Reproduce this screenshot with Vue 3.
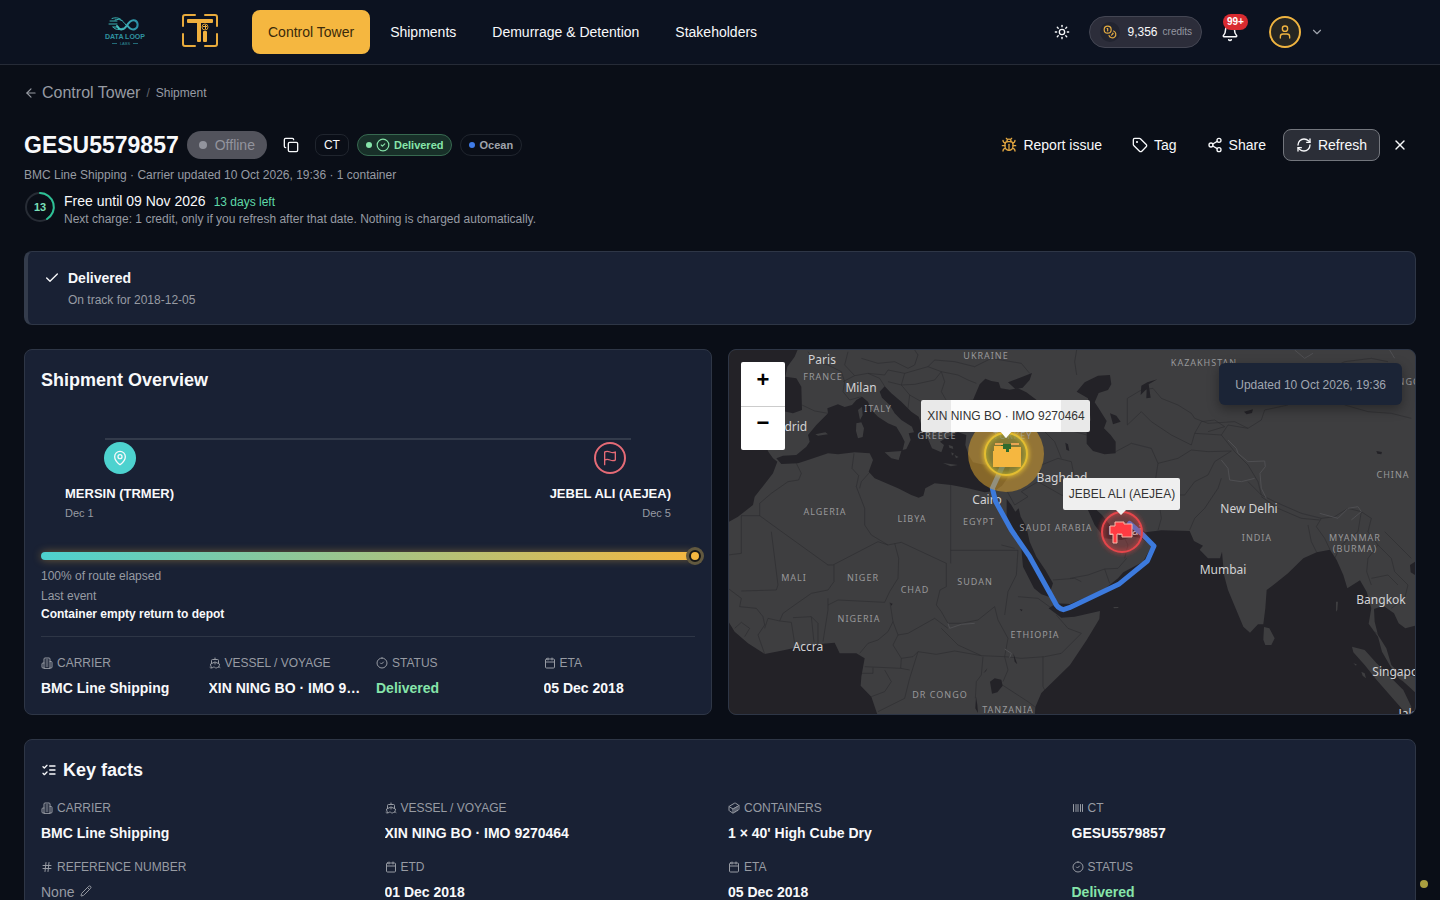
<script setup>
import { h } from 'vue'

const glyphs = {
  arrow: ['m12 19-7-7 7-7', 'M19 12H5'],
  copy: ['M10 8h10a2 2 0 0 1 2 2v10a2 2 0 0 1-2 2H10a2 2 0 0 1-2-2V10a2 2 0 0 1 2-2z', 'M4 16c-1.1 0-2-.9-2-2V4c0-1.1.9-2 2-2h10c1.1 0 2 .9 2 2'],
  check: ['M20 6 9 17l-5-5'],
  circleCheck: ['M12 2a10 10 0 1 0 0 20 10 10 0 0 0 0-20z', 'm9 12 2 2 4-4'],
  x: ['M18 6 6 18', 'm6 6 12 12'],
  bug: ['m8 2 1.9 1.9', 'M14.1 3.9 16 2', 'M9 7.1v-1a3 3 0 1 1 6 0v1', 'M12 20c-3.3 0-6-2.7-6-6v-3a4 4 0 0 1 4-4h4a4 4 0 0 1 4 4v3c0 3.3-2.7 6-6 6', 'M12 20v-9', 'M6.5 9C4.6 8.8 3 7.1 3 5', 'M6 13H2', 'M3 21c0-2.1 1.7-3.9 3.8-4', 'M21 5c0 2.1-1.6 3.8-3.5 4', 'M22 13h-4', 'M17.2 17c2.1.1 3.8 1.9 3.8 4'],
  tag: ['M12.6 2.6A2 2 0 0 0 11.2 2H4a2 2 0 0 0-2 2v7.2a2 2 0 0 0 .6 1.4l8.7 8.7a2.4 2.4 0 0 0 3.4 0l6.6-6.6a2.4 2.4 0 0 0 0-3.4z', 'M7.5 7v1', 'M7 7.500h1'],
  share: ['M18 2a3 3 0 1 0 0 6 3 3 0 0 0 0-6z', 'M6 9a3 3 0 1 0 0 6 3 3 0 0 0 0-6z', 'M18 16a3 3 0 1 0 0 6 3 3 0 0 0 0-6z', 'm8.600 13.500 6.800 4', 'm15.400 6.500-6.800 4'],
  refresh: ['M3 12a9 9 0 0 1 9-9 9.750 9.750 0 0 1 6.740 2.740L21 8', 'M21 3v5h-5', 'M21 12a9 9 0 0 1-9 9 9.750 9.750 0 0 1-6.740-2.740L3 16', 'M8 16H3v5'],
  sun: ['M12 8a4 4 0 1 0 0 8 4 4 0 0 0 0-8z', 'M12 2v2', 'M12 20v2', 'm4.930 4.930 1.410 1.410', 'm17.660 17.660 1.410 1.410', 'M2 12h2', 'M20 12h2', 'm6.340 17.660-1.410 1.410', 'm19.070 4.930-1.410 1.410'],
  coins: ['M8 2a6 6 0 1 0 0 12A6 6 0 0 0 8 2z', 'M18.090 10.370A6 6 0 1 1 10.340 18', 'M7 6h1v4', 'm16.710 13.880.7.710-2.820 2.820'],
  bell: ['M10.270 21a2 2 0 0 0 3.460 0', 'M3.260 15.330A1 1 0 0 0 4 17h16a1 1 0 0 0 .740-1.670C19.410 13.960 18 12.500 18 8A6 6 0 0 0 6 8c0 4.500-1.410 5.960-2.740 7.330'],
  user: ['M19 21v-2a4 4 0 0 0-4-4H9a4 4 0 0 0-4 4v2', 'M12 3a4 4 0 1 0 0 8 4 4 0 0 0 0-8z'],
  chevron: ['m6 9 6 6 6-6'],
  pin: ['M20 10c0 5-5.500 10.200-7.400 11.800a1 1 0 0 1-1.200 0C9.500 20.200 4 15 4 10a8 8 0 0 1 16 0', 'M12 7a3 3 0 1 0 0 6 3 3 0 0 0 0-6z'],
  flag: ['M4 15s1-1 4-1 5 2 8 2 4-1 4-1V3s-1 1-4 1-5-2-8-2-4 1-4 1z', 'M4 22v-7'],
  building: ['M6 22V4a2 2 0 0 1 2-2h8a2 2 0 0 1 2 2v18Z', 'M6 12H4a2 2 0 0 0-2 2v6a2 2 0 0 0 2 2h2', 'M18 9h2a2 2 0 0 1 2 2v9a2 2 0 0 1-2 2h-2', 'M10 6h4', 'M10 10h4', 'M10 14h4', 'M10 18h4'],
  ship: ['M12 10.200V14', 'M12 2v3', 'M19 13V7a2 2 0 0 0-2-2H7a2 2 0 0 0-2 2v6', 'M19.400 20A11.600 11.600 0 0 0 21 14l-8.200-3.600a2 2 0 0 0-1.600 0L3 14a11.600 11.600 0 0 0 2.800 7.800', 'M2 21c.6.5 1.200 1 2.500 1 2.500 0 2.500-2 5-2 1.300 0 1.900.5 2.500 1s1.200 1 2.500 1c2.500 0 2.500-2 5-2 1.300 0 1.900.5 2.500 1'],
  calendar: ['M8 2v4', 'M16 2v4', 'M5 4h14a2 2 0 0 1 2 2v14a2 2 0 0 1-2 2H5a2 2 0 0 1-2-2V6a2 2 0 0 1 2-2z', 'M3 10h18'],
  container: ['M22 7.700c0-.6-.4-1.200-.8-1.500l-6.300-3.900a1.700 1.700 0 0 0-1.700 0l-10.300 6c-.5.2-.9.8-.9 1.400v6.600c0 .5.4 1.200.8 1.500l6.300 3.900a1.700 1.700 0 0 0 1.700 0l10.300-6c.5-.3.9-1 .9-1.500Z', 'M10 21.900V14L2.100 9.100', 'm10 14 11.900-6.900', 'M14 19.800v-8.100', 'M18 17.500V9.400'],
  barcode: ['M3 5v14', 'M8 5v14', 'M12 5v14', 'M17 5v14', 'M21 5v14'],
  hash: ['M4 9h16', 'M4 15h16', 'M10 3 8 21', 'm16 3-2 18'],
  pencil: ['M21.200 6.800a1 1 0 0 0-4-4L3.800 16.200a2 2 0 0 0-.5.8L2 21.400a.5.5 0 0 0 .6.6l4.400-1.300a2 2 0 0 0 .8-.5z', 'm15 5 4 4'],
  list: ['m3 17 2 2 4-4', 'm3 7 2 2 4-4', 'M13 6h8', 'M13 12h8', 'M13 18h8'],
}

const Icon = (p) =>
  h('svg', {
    viewBox: '0 0 24 24', width: p.size || 16, height: p.size || 16, fill: 'none', stroke: 'currentColor',
    'stroke-width': 2, 'stroke-linecap': 'round', 'stroke-linejoin': 'round', 'aria-hidden': 'true',
  }, glyphs[p.name].map((d) => h('path', { d })))
Icon.props = ['name', 'size']

const summary = [
  { icon: 'building', label: 'Carrier', value: 'BMC Line Shipping' },
  { icon: 'ship', label: 'Vessel / Voyage', value: 'XIN NING BO · IMO 9270464' },
  { icon: 'circleCheck', label: 'Status', value: 'Delivered', tone: 'good' },
  { icon: 'calendar', label: 'ETA', value: '05 Dec 2018' },
]
const facts = [
  { icon: 'building', label: 'Carrier', value: 'BMC Line Shipping' },
  { icon: 'ship', label: 'Vessel / Voyage', value: 'XIN NING BO · IMO 9270464' },
  { icon: 'container', label: 'Containers', value: "1 × 40' High Cube Dry" },
  { icon: 'barcode', label: 'CT', value: 'GESU5579857' },
  { icon: 'hash', label: 'Reference number', value: 'None', tone: 'none', editable: true },
  { icon: 'calendar', label: 'ETD', value: '01 Dec 2018' },
  { icon: 'calendar', label: 'ETA', value: '05 Dec 2018' },
  { icon: 'circleCheck', label: 'Status', value: 'Delivered', tone: 'good' },
]

const countries = [
  ['FRANCE', 94, 30], ['UKRAINE', 257, 9], ['ITALY', 149, 62], ['GREECE', 208, 89],
  ['KAZAKHSTAN', 475, 16], ['MONGOLIA', 680, 35], ['CHINA', 664, 128], ['ALGERIA', 96, 165], ['LIBYA', 183, 172],
  ['EGYPT', 250, 175], ['SAUDI ARABIA', 327, 181], ['IRAN', 393, 136], ['INDIA', 528, 191], ['MYANMAR', 626, 191],
  ['(BURMA)', 626, 202], ['MALI', 65, 231], ['NIGER', 134, 231], ['CHAD', 186, 243], ['SUDAN', 246, 235],
  ['NIGERIA', 130, 272], ['ETHIOPIA', 306, 288], ['DR CONGO', 211, 348], ['TANZANIA', 279, 363],
]
const cities = [
  ['Paris', 93, 14], ['Milan', 132, 42], ['Madrid', 58, 81], ['Cairo', 258, 154], ['Baghdad', 333, 132],
  ['New Delhi', 520, 163], ['Mumbai', 494, 224], ['Bangkok', 652, 254], ['Singapore', 672, 326],
  ['Accra', 79, 301], ['Jakarta', 689, 368], ['Dubai', 396, 185],
]

// Map geometry is drawn on a grid three times finer than the label grid.
const seas = [
  'M0 0H215L200 35 178 65 172 95 205 100 220 125 222 195 195 205 150 195 110 180 95 230 100 280 122 322 135 340 148 350 135 385 100 430 80 455 75 480 30 515 0 532Z',
  'M145 340 165 332 205 330 235 305 245 290 240 270 265 240 300 205 298 190 330 178 350 186 372 180 385 165 402 155 420 170 430 195 450 215 480 235 505 245 520 270 530 290 524 315 535 312 548 285 542 265 558 262 552 245 520 225 500 205 485 180 462 158 455 140 470 124 490 145 520 170 550 200 572 215 585 255 600 282 612 310 640 322 648 300 636 290 655 278 690 262 715 270 712 300 722 330 735 352 760 358 800 362 850 350 842 380 838 400 822 422 800 438 770 442 720 430 670 420 620 415 592 430 586 452 572 458 550 450 510 430 440 400 422 380 435 345 425 325 380 322 330 328 300 325 240 345 210 355 160 357Z',
  'M735 165 755 118 772 101 790 108 812 112 818 130 845 134 870 130 895 142 930 168 1000 200 1000 240 760 240Z',
  'M840 112 872 100 912 84 905 105 884 128 862 132Z',
  'M1046 140 1070 112 1110 92 1146 90 1150 118 1140 135 1112 144 1100 172 1112 190 1136 228 1128 250 1148 270 1163 290 1163 325 1130 328 1095 318 1076 296 1076 250 1088 225 1080 160Z',
  'M1146 205 1165 212 1178 230 1155 238Z',
  'M1240 122 1258 112 1288 103 1262 118 1268 158 1255 160 1256 132 1238 150Z',
  'M1548 200 1575 193 1572 204 1556 208Z M1945 318 1962 321 1960 328 1948 326Z M1012 293 1020 298 1024 318 1015 314Z',
  'M836 462 850 480 862 500 872 490 878 515 895 545 905 590 925 635 952 675 975 715 962 755 940 748 918 730 885 665 880 610 850 560 836 510Z',
  'M1068 468 1100 490 1122 510 1150 545 1180 560 1220 540 1252 562 1300 556 1385 558 1398 588 1425 602 1415 614 1440 640 1476 640 1482 620 1488 690 1500 735 1525 795 1546 845 1566 863 1590 838 1606 838 1612 790 1616 735 1636 720 1680 685 1726 640 1766 622 1806 614 1826 645 1846 690 1858 730 1896 706 1916 740 1930 790 1922 836 1950 875 1962 920 1988 965 2014 1002 2024 1008 2035 1018 2070 1050V1120H920L922 1086 940 1044 980 1005 1026 960 1076 885 1114 822 1116 798 1040 815 1000 818 962 790 985 775 1026 777 1126 735 1170 700 1186 682 1245 650 1262 620 1272 603 1240 580 1216 575 1180 585 1130 580 1100 540Z',
  'M1938 792 1966 782 1998 805 2012 835 2032 850 2061 842V995L2014 985 1990 960 1975 910 1950 870 1940 830Z',
  'M2046 660 2061 650V690L2048 682Z',
  'M0 828 20 860 60 895 110 927 160 917 240 900 320 893 335 925 385 925 410 940 400 995 398 1022 430 1055 452 1120H0Z',
  'M786 1010 800 1000 820 1004 824 1022 808 1042 792 1046Z M766 985 778 970 774 978Z M744 1055 748 1080 750 1104 742 1090Z M856 925 868 958 860 950Z M875 792 884 794 880 799Z M486 774 494 776 490 782Z',
]
const islands = [
  'M1608 846 1624 850 1640 880 1630 900 1612 900 1606 884Z',
  'M1872 905 1910 915 1946 955 1986 995 2026 1035 2050 1085 2048 1120 2025 1095 1990 1055 1946 1005 1910 960 1876 922Z',
  'M385 235 400 232 408 250 404 276 390 280 384 258Z M390 195 402 185 404 210 396 225Z',
  'M470 322 520 318 512 345 490 340Z M645 354 690 360 668 364Z M262 268 292 262 300 268 270 272Z M1156 786 1172 786 1170 789 1158 790Z',
  'M662 300 674 304 676 312 664 308Z M680 330 692 336 684 340Z M670 322 678 326 672 332Z',
  'M1824 770 1830 770 1828 795 1824 800Z M1876 955 1886 958 1884 962Z M1900 980 1910 985 1914 1000 1904 992Z',
]
const borders = [
  'M222 180 260 198 300 205', 'M240 20 260 50 300 60 340 80 350 110 345 140 365 165 400 155', 'M345 110 380 92 420 85 455 100 470 124',
  'M360 20 350 60 380 92', 'M400 40 450 55 500 50 540 70 560 60', 'M420 85 470 90 480 75 530 85 600 65 640 80 620 105 560 118 520 120 480 110',
  'M560 60 570 30 560 15', 'M640 80 690 90 720 105 745 115', 'M600 65 620 45 680 50 740 65 790 40 880 55 905 85', 'M520 120 545 150 540 190', 'M545 150 580 170 620 180 660 175 735 165',
  'M580 170 590 210 575 225', 'M600 210 640 225 700 210 712 250', 'M530 85 520 120', 'M640 80 650 110 640 140 660 175',
  'M205 355 220 385 212 405 180 410 130 445 95 475 95 512 40 512 40 625 0 630', 'M95 512 150 552 300 660 315 660 450 590 480 600 520 592 655 655',
  'M378 325 372 370 392 392 385 425 410 490 410 540 430 570 480 600', 'M425 382 400 410 395 430', 'M668 420V655', 'M668 616H870', 'M655 655V725L636 735 625 780 640 800 660 835',
  'M130 560 150 720 145 735 40 738', 'M318 660V710L300 735 250 745 200 780 165 805 155 828', 'M300 760 300 795 285 890', 'M300 780 330 765 470 772 485 740 510 700 512 640 500 595',
  'M0 730 40 760 35 785 85 790 105 815 110 840 90 870 110 927', 'M20 850 40 832 65 850 50 875', 'M155 828 120 820 110 850', 'M155 828 190 832 200 895', 'M195 818 250 815 270 835 270 895', 'M250 815 258 892',
  'M486 772 495 830 480 860 450 885 420 895 395 925', 'M495 830 510 870 540 865 620 820 660 850', 'M510 870 495 900 520 940 555 935 570 920 625 928 680 918 760 932 830 935',
  'M660 835 700 835 750 825 800 785 810 825 840 880 830 935', 'M640 850 690 900 760 932', 'M410 965 518 970 520 940', 'M435 968V985L400 985', 'M470 975 490 1010 470 1040 430 1055', 'M450 1100 530 1060 545 1000 570 920', 'M518 970 545 975',
  'M830 935 840 975 825 1010', 'M765 935 760 990 745 1010 742 1060', 'M820 1018 900 1070 920 1085', 'M830 935 880 940 950 935 1000 925 1060 865 1020 850 985 810',
  'M870 616 865 690 840 740 830 810', 'M870 755 930 760 985 800', 'M975 705 1040 700 1060 710', 'M945 935V1025L955 1045', 'M1026 700 1080 690 1130 672 1170 670 1196 640', 'M1130 672 1145 715', 'M1190 640 1200 600 1190 580',
  'M838 440 860 480 900 455 880 440 930 410 940 360', 'M940 360 990 340 1030 350 1040 400 1060 440 1068 468', 'M930 410 1000 450 1060 465', 'M950 260 980 290 1000 340', 'M1000 250 1040 260 1076 270', 'M915 165 970 200 1060 205',
  'M1046 15 1040 50 1046 90', 'M1198 240V160L1240 135 1275 130 1300 160 1350 180 1390 205 1400 220 1440 235', 'M1163 320 1210 295 1270 310 1290 355 1280 420 1290 450 1300 520 1290 556',
  'M1198 240 1240 200 1270 230 1330 270 1390 300 1400 265 1480 270 1520 320', 'M1290 355 1350 340 1390 315 1440 320 1510 318', 'M1290 450 1370 450 1400 410 1440 390 1460 350 1510 318', 'M1385 555 1400 520 1430 490 1470 430 1480 400',
  'M1400 265 1420 230 1460 225 1490 245 1440 260', 'M1440 235 1520 230 1560 250 1600 225 1610 195', 'M1480 270 1500 240 1560 250', 'M1610 195 1680 180 1740 120 1790 80 1850 50 1930 40 1980 50', 'M1850 180 1920 200 1990 205 2050 220',
  'M1520 320 1560 360 1590 410 1600 450 1640 470 1720 505 1780 520', 'M1560 410 1600 450', 'M1600 455 1650 490 1720 520 1775 525', 'M1780 520 1820 515 1860 490 1900 500 1930 520 1920 560 1950 600',
  'M1780 520 1765 545 1790 580 1806 614', 'M1740 540 1750 590 1766 622', 'M1900 500 1890 560 1840 600 1820 640', 'M1950 600 1920 640 1916 680 1930 720', 'M1950 600 1990 640 2000 680 2040 720 2030 760 1990 790', 'M1930 700 1980 690 2010 720', 'M1970 560 2010 600 2050 640',
  'M1940 860 1960 875', 'M820 600 860 610',
]
const ranges = ['M1500 285 1525 310 1530 325', 'M1480 345 1500 370 1505 405 1540 410 1580 400', 'M1530 325 1560 350 1610 348 1612 365 1596 385 1600 430 1615 460', 'M1775 505 1830 520 1860 490 1890 485 1900 500 1870 525', 'M1700 15 1730 40 1755 25', 'M660 835 665 850 700 838 740 835', 'M830 912 850 925 845 938', 'M1985 15 2000 40']
</script>

<template>
  <div class="page">
    <header class="topbar">
      <a href="#" class="brand" aria-label="Data Loop Labs">
        <svg viewBox="0 0 42 30" width="42" height="30">
          <defs><linearGradient id="loop" x1="0" x2="1"><stop offset="0" stop-color="#4cc9c4" /><stop offset="1" stop-color="#2a8fa6" /></linearGradient></defs>
          <g fill="none" stroke-linecap="round">
            <path d="M13 10c3 5 7 4 9.500 0s5-7 8.500-5.500 3.500 7 0 8.500-6-1-8-4" stroke="url(#loop)" stroke-width="2" />
            <path d="M22 9C19 5 16 2 11 4M6 5h7M8 2.500c4-1.500 8-.5 10 2M5 8h8M9 11h5M9 11c2 3 7 3.500 10 1" stroke="#3ab3b5" />
          </g>
          <text x="21" y="23" text-anchor="middle" font-size="7" font-weight="700" fill="#2f93a0">DATA LOOP</text>
          <text x="21" y="29" text-anchor="middle" font-size="4" fill="#2c8b9a">LABS</text>
          <path d="M8 27.500h5M29 27.500h5" stroke="#236a78" />
        </svg>
      </a>
      <a href="#" class="brand mark" aria-label="Ti">
        <svg viewBox="0 0 36 34" width="36" height="34">
          <path d="M1 12V3q0-2 2-2h10M23 1h10q2 0 2 2v9M35 20v10q0 2-2 2H23M13 32H3q-2 0-2-2V20" fill="none" stroke="#e9ab3c" stroke-width="2" stroke-linecap="round" />
          <g fill="#f0b03e">
            <rect x="5" y="5" width="26" height="4" rx="1" />
            <rect x="15" y="5" width="4" height="23" rx="1" />
            <rect x="21" y="17" width="4" height="11" rx="1" />
            <circle cx="23" cy="13" r="3" fill="none" stroke="#d49a35" />
            <path d="M21 12h4v1h-4zM23 11h1v4h-1z" />
          </g>
        </svg>
      </a>
      <nav class="nav">
        <a href="#" class="active">Control Tower</a>
        <a href="#">Shipments</a>
        <a href="#">Demurrage &amp; Detention</a>
        <a href="#">Stakeholders</a>
      </nav>
      <div class="tools">
        <button class="plain sun" aria-label="Toggle theme"><Icon name="sun" /></button>
        <button class="credits"><span class="coin"><Icon name="coins" size="14" /></span><b>9,356</b><small>credits</small></button>
        <button class="plain bell" aria-label="Notifications"><Icon name="bell" size="18" /><span class="count">99+</span></button>
        <button class="account" aria-label="Account"><span class="avatar"><Icon name="user" /></span><Icon name="chevron" size="14" /></button>
      </div>
    </header>

    <main class="main">
      <nav class="crumbs">
        <a href="#"><Icon name="arrow" size="14" />Control Tower</a><span class="slash">/</span><span>Shipment</span>
      </nav>

      <section class="title-row">
        <h1>GESU5579857</h1>
        <span class="offline"><i class="dot"></i>Offline</span>
        <button class="plain copy" aria-label="Copy"><Icon name="copy" /></button>
        <span class="chip ct">CT</span>
        <span class="chip delivered"><i class="dot"></i><Icon name="circleCheck" size="14" />Delivered</span>
        <span class="chip ocean"><i class="dot"></i>Ocean</span>
        <div class="actions">
          <button class="act report"><Icon name="bug" />Report issue</button>
          <button class="act"><Icon name="tag" />Tag</button>
          <button class="act"><Icon name="share" />Share</button>
          <button class="act refresh"><Icon name="refresh" />Refresh</button>
          <button class="plain close" aria-label="Close"><Icon name="x" /></button>
        </div>
      </section>
      <p class="sub">BMC Line Shipping · Carrier updated 10 Oct 2026, 19:36 · 1 container</p>
      <section class="free">
        <div class="ring">
          <svg viewBox="0 0 32 32" width="32" height="32" fill="none" stroke-width="2">
            <circle cx="16" cy="16" r="14" stroke="#272c35" />
            <path d="M16 2a14 14 0 0 1 7 26" stroke="#2cc296" stroke-linecap="round" />
          </svg>
          <b>13</b>
        </div>
        <div>
          <p class="until">Free until 09 Nov 2026<span>13 days left</span></p>
          <p class="note">Next charge: 1 credit, only if you refresh after that date. Nothing is charged automatically.</p>
        </div>
      </section>

      <section class="banner">
        <Icon name="check" />
        <div><h3>Delivered</h3><p>On track for 2018-12-05</p></div>
      </section>

      <div class="split">
        <section class="card overview">
          <h2>Shipment Overview</h2>
          <div class="route">
            <div class="stop">
              <span class="badge from"><Icon name="pin" /></span>
              <div class="place"><b>MERSIN (TRMER)</b><span>Dec 1</span></div>
            </div>
            <div class="stop end">
              <span class="badge to"><Icon name="flag" /></span>
              <div class="place"><b>JEBEL ALI (AEJEA)</b><span>Dec 5</span></div>
            </div>
          </div>
          <div class="bar"><i></i></div>
          <p class="elapsed">100% of route elapsed</p>
          <p class="last">Last event</p>
          <p class="event">Container empty return to depot</p>
          <dl class="grid summary">
            <div v-for="f in summary" :key="f.label" class="fact">
              <dt><Icon :name="f.icon" size="12" />{{ f.label }}</dt><dd :class="f.tone">{{ f.value }}</dd>
            </div>
          </dl>
        </section>

        <section class="map">
          <svg class="canvas" viewBox="0 0 686 364" preserveAspectRatio="xMidYMid slice">
            <defs><filter id="glow" x="-30%" y="-30%" width="160%" height="160%"><feGaussianBlur stdDeviation="2" /></filter></defs>
            <rect width="686" height="364" fill="#3e3e40" />
            <g transform="scale(.33333) translate(-3 -15)">
              <path v-for="d in borders" :key="d" :d="d" class="border" />
              <path v-for="d in ranges" :key="d" :d="d" class="range" />
              <path v-for="d in seas" :key="d" :d="d" fill="#232227" />
              <path v-for="d in islands" :key="d" :d="d" fill="#3e3e40" />
            </g>
            <text v-for="c in countries" :key="c[0]" :x="c[1]" :y="c[2]" class="country">{{ c[0] }}</text>
            <text v-for="c in cities" :key="c[0]" :x="c[1]" :y="c[2]" class="city">{{ c[0] }}</text>
            <g transform="scale(.33333) translate(-3 -15)">
              <path class="lane" d="M830 350 793 430 803 470 850 555 905 635 980 770Q986 788 1006 794L1024 788 1172 718 1258 648 1278 603 1240 565 1205 535" />
            </g>
            <circle cx="277" cy="104" r="38" fill="#d9a12e" fill-opacity=".55" />
            <text x="284" y="89" class="country">TURKEY</text>
            <circle cx="277" cy="104" r="21" fill="none" stroke="#e3bd31" stroke-width="4" filter="url(#glow)" />
            <circle cx="277" cy="104" r="21" fill="#6b8435" fill-opacity=".4" stroke="#e3bd31" stroke-width="2" />
            <path fill="#2f6b2d" d="M272 94h10v8h-10z" />
            <path fill="#f5b740" d="M264 101h1v-5h9v3h3v3h3v-3h2v-2h10v20h-28z" />
            <path fill="#e9a552" d="M266 93h8v2h-8zM282 93h8v2h-8z" />
            <circle cx="393" cy="182" r="20" fill="none" stroke="#f04444" stroke-width="4" stroke-opacity=".5" filter="url(#glow)" />
            <circle cx="393" cy="182" r="20" fill="#f04444" fill-opacity=".25" stroke="#e5464b" stroke-width="2" />
            <path fill="#ff3b42" stroke="#f8b9a8" d="M386 172h9v2h8v13h-10v-3h-5v9h-4v-9h-3v-8h5z" />
            <g class="tip">
              <path fill="#e9e9e9" d="M194 50h165a2 2 0 0 1 2 2v28a2 2 0 0 1-2 2h-77l-5 6-5-6h-78a2 2 0 0 1-2-2V52a2 2 0 0 1 2-2z" />
              <path fill="#fcfcfc" d="M222 50h110v32h-50l-5 6-5-6h-50z" />
              <text x="277" y="70">XIN NING BO · IMO 9270464</text>
              <path fill="#efefef" d="M336 128h113a2 2 0 0 1 2 2v28a2 2 0 0 1-2 2h-52l-5 5-5-5h-51a2 2 0 0 1-2-2v-28a2 2 0 0 1 2-2z" />
              <text x="393" y="148">JEBEL ALI (AEJEA)</text>
            </g>
          </svg>
          <div class="zoom"><button aria-label="Zoom in">+</button><button aria-label="Zoom out">−</button></div>
          <div class="updated">Updated 10 Oct 2026, 19:36</div>
        </section>
      </div>

      <section class="card facts">
        <h2><Icon name="list" />Key facts</h2>
        <dl class="grid">
          <div v-for="f in facts" :key="f.label" class="fact">
            <dt><Icon :name="f.icon" size="12" />{{ f.label }}</dt>
            <dd :class="f.tone">{{ f.value }}<button v-if="f.editable" class="plain edit" aria-label="Edit"><Icon name="pencil" size="12" /></button></dd>
          </div>
        </dl>
      </section>
    </main>
    <span class="live"></span>
  </div>
</template>

<style>
body { background: #0a0e17; }
</style>

<style scoped>
* { box-sizing: border-box; margin: 0; padding: 0; }
.page { height: 100vh; overflow: hidden auto; scrollbar-width: none; background: #0a0e17; color: #f8f9fb; font: 14px/20px "Liberation Sans", Arial, sans-serif; }
a { color: inherit; text-decoration: none; }
button { font: inherit; color: inherit; background: none; border: 0; display: inline-flex; align-items: center; justify-content: center; cursor: pointer; }
svg { display: block; flex: none; }

.topbar { display: flex; align-items: center; height: 65px; padding: 0 116px 0 104px; background: #0c1220; border-bottom: 1px solid #262b37; }
.brand { margin-bottom: 2px; }
.mark { margin-left: 36px; }
.nav { display: flex; gap: 4px; margin-left: 34px; }
.nav a { display: flex; align-items: center; height: 44px; padding: 0 16px; border-radius: 8px; white-space: nowrap; }
.nav .active { background: #f5b740; color: #3a2a0a; }
.tools { display: flex; align-items: center; margin-left: auto; }
.credits { gap: 5px; height: 32px; padding: 0 9px 0 10px; margin-left: 19px; border: 1px solid #444653; border-radius: 16px; background: #2c2d3a; }
.coin { display: grid; place-items: center; width: 20px; height: 20px; border-radius: 50%; background: #222430; color: #e4ac42; margin-right: 3px; }
.credits b { font-size: 12px; font-weight: 400; }
.credits small { font-size: 10px; color: #9496a0; }
.bell { position: relative; margin-left: 19px; padding-top: 2px; }
.count { position: absolute; left: 2px; top: -8px; padding: 0 4px; border-radius: 8px; background: #d92b30; color: #fff; font-size: 10px; line-height: 16px; font-weight: 700; }
.account { gap: 9px; margin-left: 30px; color: #a0a4ad; }
.avatar { display: grid; place-items: center; width: 32px; height: 32px; border: 2px solid #f0b440; border-radius: 50%; background: #252522; color: #f0b440; }

.main { padding: 16px 24px 24px; }
.crumbs { display: flex; align-items: center; gap: 6px; height: 24px; font-size: 12px; color: #979ba3; }
.crumbs a { display: flex; align-items: center; gap: 4px; font-size: 16px; }
.slash { color: #62666f; }
.title-row { display: flex; align-items: center; gap: 8px; height: 32px; margin-top: 24px; }
h1 { font-size: 23px; line-height: 32px; }
.offline { display: flex; align-items: center; gap: 8px; height: 28px; padding: 0 12px; border-radius: 14px; background: #52535c; color: #92949d; }
.dot { width: 6px; height: 6px; border-radius: 50%; background: currentColor; }
.offline .dot { width: 8px; height: 8px; }
.copy, .close { width: 32px; height: 32px; }
.chip { display: flex; align-items: center; height: 22px; padding: 0 8px; border: 1px solid #20252e; border-radius: 11px; font-size: 12px; }
.ct { border-radius: 8px; }
.delivered { gap: 4px; background: #183029; border-color: #376950; color: #86e5aa; font-size: 11px; font-weight: 700; }
.ocean { gap: 4px; color: #a0a4ac; font-size: 11px; font-weight: 700; }
.ocean .dot { background: #3f7ce8; }
.actions { display: flex; align-items: center; gap: 4px; margin-left: auto; }
.act { gap: 6px; height: 32px; padding: 0 12px; border: 1px solid transparent; border-radius: 8px; white-space: nowrap; }
.report svg { color: #e0a540; }
.refresh { background: #2b2e37; border-color: #73767d; }
.sub { margin-top: 6px; font-size: 12px; line-height: 16px; color: #979ba3; }
.free { display: flex; align-items: center; gap: 8px; height: 34px; margin-top: 9px; }
.ring { position: relative; width: 32px; height: 32px; margin-top: -4px; }
.ring b { position: absolute; inset: 0; text-align: center; font-size: 11px; line-height: 32px; color: #7be0ba; }
.until { line-height: 18px; }
.until span { margin-left: 8px; font-size: 12px; color: #5fd9a8; }
.note { font-size: 12px; line-height: 16px; color: #979ba3; }

.banner { display: flex; gap: 8px; margin-top: 25px; padding: 16px; border: 1px solid #2e3646; border-left: 4px solid #343c4c; border-radius: 8px; background: #192134; }
.banner svg { margin-top: 2px; }
.banner h3 { font-size: 14px; line-height: 20px; }
.banner p { margin-top: 4px; font-size: 12px; line-height: 16px; color: #979ba3; }

.split { display: grid; grid-template-columns: 1fr 1fr; gap: 16px; margin-top: 24px; }
.card { min-width: 0; padding: 16px; border: 1px solid #2e3646; border-radius: 8px; background: #192134; }
h2 { display: flex; align-items: center; gap: 6px; font-size: 18px; line-height: 28px; }
.route { position: relative; display: flex; justify-content: space-between; margin-top: 24px; padding: 24px 24px 0; }
.route::before { content: ""; position: absolute; left: 64px; right: 64px; top: 20px; height: 2px; background: #333b4b; }
.stop { display: flex; flex-direction: column; align-items: center; }
.badge { display: grid; place-items: center; width: 32px; height: 32px; border-radius: 50%; }
.from { background: #4dd2cf; }
.to { border: 2px solid #e56b76; color: #e56b76; }
.place { display: flex; flex-direction: column; gap: 1px; margin-top: 10px; font-size: 11px; line-height: 16px; color: #979ba3; }
.place b { font-size: 13px; line-height: 20px; color: #f8f9fb; }
.end .place { text-align: right; }
.bar { position: relative; height: 8px; margin-top: 31px; border-radius: 4px; background: linear-gradient(90deg, #4dd2cf, #f5b740); box-shadow: 0 0 8px rgba(245, 183, 64, .4); }
.bar i { position: absolute; right: -6px; top: -2px; width: 12px; height: 12px; border: 2px solid #171717; border-radius: 50%; background: #f5b740; box-shadow: 0 0 0 3px #62593f; }
.elapsed, .last { margin-top: 8px; font-size: 12px; line-height: 16px; color: #979ba3; }
.last { margin-top: 4px; }
.event { font-size: 12px; font-weight: 700; }
.grid { display: grid; grid-template-columns: repeat(4, minmax(0, 1fr)); gap: 16px; }
.summary { margin-top: 12px; padding-top: 18px; border-top: 1px solid #2e3646; }
.fact dt { display: flex; align-items: center; gap: 4px; font-size: 12px; line-height: 16px; color: #979ba3; text-transform: uppercase; }
.fact dd { margin-top: 7px; font-weight: 700; overflow: hidden; text-overflow: ellipsis; white-space: nowrap; }
.summary dd { margin-right: -4px; }
.fact .good { color: #86e5aa; }
.fact .none { font-weight: 400; color: #979ba3; }
.edit { margin-left: 6px; }
.facts { margin-top: 24px; }
.facts .grid { margin-top: 16px; }

.map { position: relative; overflow: hidden; border: 1px solid #2e3646; border-radius: 8px; background: #3e3e40; }
.canvas { position: absolute; width: 100%; height: 100%; }
.border { fill: none; stroke: #2d2d30; stroke-width: 2; stroke-linejoin: round; }
.range { fill: none; stroke: #4f4f52; stroke-width: 3; }
.lane { fill: none; stroke: #3c7add; stroke-width: 15; stroke-linejoin: round; stroke-linecap: round; }
.country { font: 9px "Noto Sans", sans-serif; letter-spacing: 1px; fill: #98989a; text-anchor: middle; }
.city { font: 12px "Noto Sans", sans-serif; fill: #d2d2d4; text-anchor: middle; }
.tip text { font-size: 12px; fill: #333; text-anchor: middle; }
.zoom { position: absolute; left: 12px; top: 12px; display: flex; flex-direction: column; width: 44px; border-radius: 2px; background: #fff; color: #000; overflow: hidden; }
.zoom button { height: 44px; padding-bottom: 9px; font-size: 22px; font-weight: 700; }
.zoom button + button { padding-bottom: 12px; border-top: 1px solid #ccc; }
.updated { position: absolute; right: 13px; top: 13px; padding: 14px 16px 12px; border-radius: 6px; background: #1b2436; color: #a0a6b0; font-size: 12px; line-height: 16px; box-shadow: 0 4px 12px rgba(0, 0, 0, .35); }
.live { position: fixed; right: 12px; bottom: 12px; width: 8px; height: 8px; border-radius: 50%; background: #aa9f40; }
</style>
